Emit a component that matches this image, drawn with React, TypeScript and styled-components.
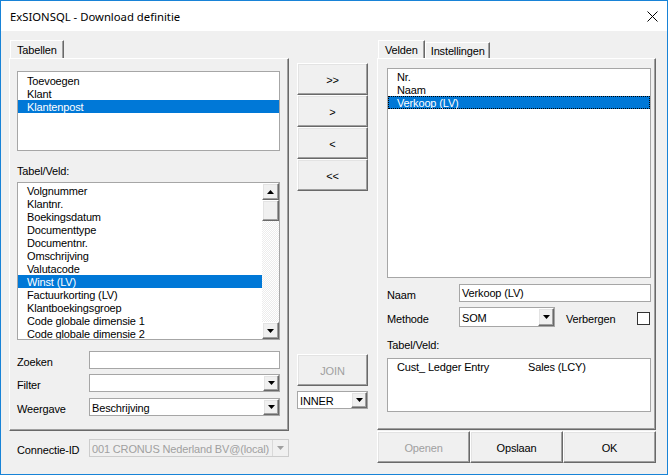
import styled, { createGlobalStyle, css } from "styled-components";

const GlobalStyle = createGlobalStyle`
  html, body {
    margin: 0;
    padding: 0;
    background: #f0f0f0;
  }
  body {
    font-family: "Liberation Sans", Arial, sans-serif;
    font-size: 11px;
    letter-spacing: -0.15px;
    color: #000;
  }
`;

const raised = css`
  background: #f0f0f0;
  border: 1px solid;
  border-color: #ffffff #696969 #696969 #ffffff;
  box-shadow: inset -1px -1px #a0a0a0, inset 1px 1px #e3e3e3;
`;

const Window = styled.div`
  width: 668px;
  height: 475px;
  box-sizing: border-box;
  border: 1px solid #1883d7;
  background: #f0f0f0;
  display: flex;
  flex-direction: column;
  overflow: hidden;
`;

const TitleBar = styled.div`
  height: 30px;
  flex: none;
  background: #fff;
  display: flex;
  align-items: center;
  justify-content: space-between;
  padding-left: 9px;
`;

const Title = styled.span`
  font-family: "Noto Sans", "Open Sans", sans-serif;
  font-size: 11.3px;
  letter-spacing: 0;
`;

const CloseBox = styled.div`
  width: 30px;
  height: 30px;
  display: flex;
  align-items: center;
  justify-content: center;
`;

const Body = styled.div`
  flex: 1;
  display: flex;
  padding: 9px 0 0 8px;
`;

const Column = styled.div<{ $w: number; $ml?: number }>`
  width: ${(p) => p.$w}px;
  margin-left: ${(p) => p.$ml ?? 0}px;
  flex: none;
  display: flex;
  flex-direction: column;
`;

const TabStrip = styled.div`
  display: flex;
  align-items: flex-end;
  height: 18px;
  padding-left: 1px;
`;

const Tab = styled.div<{ $active?: boolean }>`
  box-sizing: border-box;
  height: ${(p) => (p.$active ? 18 : 16)}px;
  padding: ${(p) => (p.$active ? "3px 6px 0" : "2px 4px 0 5px")};
  border: 1px solid;
  border-bottom: none;
  border-color: #ffffff #696969 transparent #ffffff;
  box-shadow: inset -1px 0 #a0a0a0;
  line-height: 13px;
  white-space: nowrap;
`;

const Pane = styled.div<{ $h: number; $pad: string }>`
  box-sizing: border-box;
  height: ${(p) => p.$h}px;
  padding: ${(p) => p.$pad};
  border: 1px solid;
  border-color: #ffffff #696969 #696969 #ffffff;
  box-shadow: inset -1px -1px #a0a0a0;
  display: flex;
  flex-direction: column;
`;

const ListBox = styled.div<{ $h: number; $mt?: number }>`
  box-sizing: border-box;
  height: ${(p) => p.$h}px;
  margin-top: ${(p) => p.$mt ?? 0}px;
  background: #fff;
  border: 1px solid #a6a6a6;
  display: flex;
  overflow: hidden;
`;

const Items = styled.div<{ $pt?: number }>`
  flex: 1;
  display: flex;
  flex-direction: column;
  padding-top: ${(p) => p.$pt ?? 0}px;
`;

const Item = styled.div<{ $selected?: boolean; $focus?: boolean }>`
  flex: none;
  height: 13px;
  line-height: 14px;
  padding-left: 9px;
  white-space: nowrap;
  display: flex;
  background: ${(p) => (p.$selected ? "#0078d7" : "transparent")};
  color: ${(p) => (p.$selected ? "#fff" : "#000")};
  outline: ${(p) => (p.$focus ? "1px dotted #000" : "none")};
  outline-offset: -1px;
`;

const Cell = styled.span<{ $w?: number }>`
  width: ${(p) => (p.$w ? `${p.$w}px` : "auto")};
  flex: none;
`;

const ScrollBar = styled.div`
  width: 17px;
  flex: none;
  display: flex;
  flex-direction: column;
  background: repeating-conic-gradient(#ffffff 0 25%, #ececec 0 50%) 0 0 / 2px 2px;
`;

const ScrollButton = styled.div<{ $h?: number }>`
  ${raised};
  box-sizing: border-box;
  height: ${(p) => p.$h ?? 17}px;
  display: flex;
  align-items: center;
  justify-content: center;
`;

const Track = styled.div`
  flex: 1;
`;

const Label = styled.div<{ $mt?: number }>`
  height: 13px;
  line-height: 13px;
  margin-top: ${(p) => p.$mt ?? 0}px;
`;

const FieldRow = styled.div<{ $mt?: number; $pl?: number }>`
  display: flex;
  align-items: center;
  margin-top: ${(p) => p.$mt ?? 0}px;
  padding-left: ${(p) => p.$pl ?? 0}px;
`;

const FieldLabel = styled.span<{ $w?: number; $ml?: number }>`
  width: ${(p) => (p.$w ? `${p.$w}px` : "auto")};
  margin-left: ${(p) => p.$ml ?? 0}px;
  flex: none;
  padding-top: 5px;
  line-height: 13px;
  white-space: nowrap;
`;

const TextInput = styled.div`
  box-sizing: border-box;
  flex: 1;
  height: 18px;
  background: #fff;
  border: 1px solid #a6a6a6;
  padding-left: 2px;
  line-height: 17px;
  white-space: nowrap;
`;

const Combo = styled.div<{ $w?: number; $h?: number; $disabled?: boolean }>`
  box-sizing: border-box;
  display: flex;
  height: ${(p) => p.$h ?? 18}px;
  width: ${(p) => (p.$w ? `${p.$w}px` : "auto")};
  flex: ${(p) => (p.$w ? "none" : "1")};
  background: ${(p) => (p.$disabled ? "#f0f0f0" : "#fff")};
  border: 1px solid ${(p) => (p.$disabled ? "#cccccc" : "#a6a6a6")};
`;

const ComboValue = styled.span<{ $disabled?: boolean }>`
  flex: 1;
  padding-left: 2px;
  padding-top: 1px;
  display: flex;
  align-items: center;
  white-space: nowrap;
  overflow: hidden;
  color: ${(p) => (p.$disabled ? "#a0a0a0" : "#000")};
`;

const DropButton = styled.div<{ $disabled?: boolean }>`
  width: 16px;
  flex: none;
  box-sizing: border-box;
  display: flex;
  align-items: center;
  justify-content: center;
  ${(p) =>
    p.$disabled
      ? css`
          border-left: 1px solid #d9d9d9;
          background: #f0f0f0;
        `
      : raised}
`;

const PushButton = styled.div<{ $disabled?: boolean }>`
  ${raised};
  box-sizing: border-box;
  height: 32px;
  flex: none;
  display: flex;
  align-items: center;
  justify-content: center;
  padding-top: 1px;
  color: ${(p) => (p.$disabled ? "#a0a0a0" : "#000")};
`;

const BarButton = styled(PushButton)`
  flex: 1 1 0;
`;

const ButtonStack = styled.div<{ $mt: number }>`
  display: flex;
  flex-direction: column;
  margin-top: ${(p) => p.$mt}px;
`;

const ButtonBar = styled.div`
  display: flex;
  margin-top: 1px;
`;

const CheckBox = styled.div`
  width: 13px;
  height: 13px;
  box-sizing: border-box;
  border: 1px solid #333;
  background: #fff;
  margin-left: auto;
  margin-right: 1px;
  margin-top: 2px;
`;

function Arrow({ up, disabled }: { up?: boolean; disabled?: boolean }) {
  return (
    <svg width="7" height="4" viewBox="0 0 7 4">
      <polygon
        points={up ? "3.5,0 7,4 0,4" : "0,0 7,0 3.5,4"}
        fill={disabled ? "#a0a0a0" : "#000"}
      />
    </svg>
  );
}

function ComboBox({
  value,
  w,
  h,
  disabled,
}: {
  value?: string;
  w?: number;
  h?: number;
  disabled?: boolean;
}) {
  return (
    <Combo $w={w} $h={h} $disabled={disabled}>
      <ComboValue $disabled={disabled}>{value}</ComboValue>
      <DropButton $disabled={disabled}>
        <Arrow disabled={disabled} />
      </DropButton>
    </Combo>
  );
}

const tables = ["Toevoegen", "Klant", "Klantenpost"];
const fields = [
  "Volgnummer",
  "Klantnr.",
  "Boekingsdatum",
  "Documenttype",
  "Documentnr.",
  "Omschrijving",
  "Valutacode",
  "Winst (LV)",
  "Factuurkorting (LV)",
  "Klantboekingsgroep",
  "Code globale dimensie 1",
  "Code globale dimensie 2",
];
const chosen = ["Nr.", "Naam", "Verkoop (LV)"];

export default function App() {
  return (
    <>
      <GlobalStyle />
      <Window>
        <TitleBar>
          <Title>ExSIONSQL - Download definitie</Title>
          <CloseBox>
            <svg width="11" height="11" viewBox="0 0 11 11">
              <path d="M0.5 0.5 L10.5 10.5 M10.5 0.5 L0.5 10.5" stroke="#000" strokeWidth="1" />
            </svg>
          </CloseBox>
        </TitleBar>
        <Body>
          {/* linker kolom: tabellen */}
          <Column $w={280}>
            <TabStrip>
              <Tab $active>Tabellen</Tab>
            </TabStrip>
            <Pane $h={373} $pad="12px 8px 0 7px">
              <ListBox $h={80}>
                <Items $pt={2}>
                  {tables.map((t) => (
                    <Item key={t} $selected={t === "Klantenpost"}>
                      {t}
                    </Item>
                  ))}
                </Items>
              </ListBox>
              <Label $mt={14}>Tabel/Veld:</Label>
              <ListBox $h={158} $mt={4}>
                <Items $pt={1}>
                  {fields.map((f) => (
                    <Item key={f} $selected={f === "Winst (LV)"}>
                      {f}
                    </Item>
                  ))}
                </Items>
                <ScrollBar>
                  <ScrollButton>
                    <Arrow up />
                  </ScrollButton>
                  <ScrollButton $h={21} />
                  <Track />
                  <ScrollButton>
                    <Arrow />
                  </ScrollButton>
                </ScrollBar>
              </ListBox>
              <FieldRow $mt={11}>
                <FieldLabel $w={72}>Zoeken</FieldLabel>
                <TextInput />
              </FieldRow>
              <FieldRow $mt={5}>
                <FieldLabel $w={72}>Filter</FieldLabel>
                <ComboBox />
              </FieldRow>
              <FieldRow $mt={6}>
                <FieldLabel $w={72}>Weergave</FieldLabel>
                <ComboBox value="Beschrijving" />
              </FieldRow>
            </Pane>
            <FieldRow $mt={8} $pl={8}>
              <FieldLabel $w={72}>Connectie-ID</FieldLabel>
              <ComboBox value="001 CRONUS Nederland BV@(local)" disabled />
            </FieldRow>
          </Column>

          {/* middelste kolom: knoppen */}
          <Column $w={71} $ml={8}>
            <ButtonStack $mt={23}>
              <PushButton>&gt;&gt;</PushButton>
              <PushButton>&gt;</PushButton>
              <PushButton>&lt;</PushButton>
              <PushButton>&lt;&lt;</PushButton>
            </ButtonStack>
            <ButtonStack $mt={163}>
              <PushButton $disabled>JOIN</PushButton>
              <FieldRow $mt={5}>
                <ComboBox value="INNER" />
              </FieldRow>
            </ButtonStack>
          </Column>

          {/* rechter kolom: velden */}
          <Column $w={279} $ml={9}>
            <TabStrip>
              <Tab $active>Velden</Tab>
              <Tab>Instellingen</Tab>
            </TabStrip>
            <Pane $h={372} $pad="9px 4px 0 9px">
              <ListBox $h={210}>
                <Items $pt={1}>
                  {chosen.map((c) => (
                    <Item
                      key={c}
                      $selected={c === "Verkoop (LV)"}
                      $focus={c === "Verkoop (LV)"}
                    >
                      {c}
                    </Item>
                  ))}
                </Items>
              </ListBox>
              <FieldRow $mt={6}>
                <FieldLabel $w={72}>Naam</FieldLabel>
                <TextInput>Verkoop (LV)</TextInput>
              </FieldRow>
              <FieldRow $mt={5}>
                <FieldLabel $w={72}>Methode</FieldLabel>
                <ComboBox value="SOM" w={96} h={20} />
                <FieldLabel $ml={11}>Verbergen</FieldLabel>
                <CheckBox />
              </FieldRow>
              <Label $mt={12}>Tabel/Veld:</Label>
              <ListBox $h={54} $mt={6}>
                <Items $pt={1}>
                  <Item>
                    <Cell $w={131}>Cust_ Ledger Entry</Cell>
                    <Cell>Sales (LCY)</Cell>
                  </Item>
                </Items>
              </ListBox>
            </Pane>
            <ButtonBar>
              <BarButton $disabled>Openen</BarButton>
              <BarButton>Opslaan</BarButton>
              <BarButton>OK</BarButton>
            </ButtonBar>
          </Column>
        </Body>
      </Window>
    </>
  );
}
